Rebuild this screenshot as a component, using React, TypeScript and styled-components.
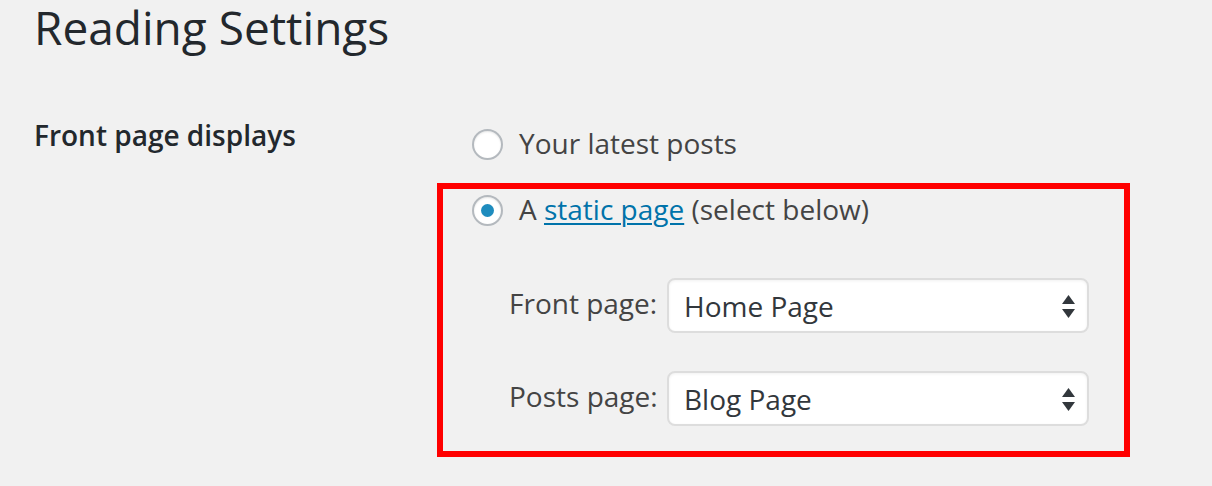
import React from 'react'
import styled, { createGlobalStyle } from 'styled-components'

const GlobalStyle = createGlobalStyle`
  html, body {
    margin: 0;
    padding: 0;
    background: #f1f1f1;
  }
  body {
    font-family: "Open Sans", "Noto Sans", sans-serif;
    color: #444;
    -webkit-font-smoothing: antialiased;
  }
`

const Page = styled.div`
  width: 1212px;
  height: 486px;
  overflow: hidden;
  padding-left: 34px;
  box-sizing: border-box;
`

const Title = styled.h1`
  margin: 0;
  font-size: 46px;
  font-weight: 400;
  line-height: 54px;
  color: #23282d;
`

const FormTable = styled.div`
  display: grid;
  grid-template-columns: 403px 1fr;
  margin-top: 61px;
`

const RowHeading = styled.div`
  font-size: 28px;
  font-weight: 600;
  line-height: 40px;
  color: #23282d;
`

const Options = styled.div`
  display: flex;
  flex-direction: column;
  padding-top: 8px;
`

const OptionRow = styled.label<{ $indent?: number }>`
  display: flex;
  align-items: center;
  gap: 16px;
  height: 40px;
  margin-left: ${p => p.$indent ?? 0}px;
  font-size: 28px;
  line-height: 40px;
  color: #444;
`

const Radio = styled.span<{ $checked?: boolean }>`
  position: relative;
  width: 31px;
  height: 31px;
  margin-top: 2px;
  box-sizing: border-box;
  border-radius: 50%;
  border: 2px solid #b4b9be;
  background: #fff;
  box-shadow: inset 0 1px 2px rgba(0, 0, 0, 0.1);
  flex-shrink: 0;

  &::after {
    content: '';
    display: ${p => (p.$checked ? 'block' : 'none')};
    position: absolute;
    left: 50%;
    top: 50%;
    width: 13px;
    height: 13px;
    margin: -6.5px 0 0 -6.5px;
    border-radius: 50%;
    background: #1e8cbe;
  }
`

const Link = styled.a`
  color: #0073aa;
  text-decoration: underline;
  text-decoration-thickness: 2px;
  text-underline-offset: 3px;
`

const Highlight = styled.div`
  width: 693px;
  box-sizing: border-box;
  margin-top: 20px;
  border: 6px solid #ff0000;
  padding: 0 0 25px 29px;
`

const PageList = styled.div`
  display: flex;
  flex-direction: column;
  gap: 38px;
  margin-top: 49px;
  padding-left: 37px;
`

const PageRow = styled.div`
  display: flex;
  align-items: center;
  height: 55px;
`

const PageLabel = styled.span`
  width: 147px;
  margin-right: 11px;
  margin-bottom: 6px;
  font-size: 28px;
  line-height: 40px;
  color: #444;
  white-space: nowrap;
`

const SelectBox = styled.div`
  display: flex;
  align-items: center;
  justify-content: space-between;
  width: 422px;
  height: 55px;
  box-sizing: border-box;
  padding: 0 12px 0 15px;
  border: 2px solid #ddd;
  border-radius: 8px;
  background: #fff;
  box-shadow: inset 0 1px 3px rgba(0, 0, 0, 0.06);
  font-size: 28px;
  line-height: 40px;
  color: #32373c;
`

const Arrows = () => (
  <svg width="13" height="24" viewBox="0 0 13 24" style={{ marginTop: 2 }}>
    <path d="M6.5 0 L13 9 L0 9 Z" fill="#32373c" />
    <path d="M0 14 L13 14 L6.5 23 Z" fill="#32373c" />
  </svg>
)

const pages = [
  { label: 'Front page:', value: 'Home Page' },
  { label: 'Posts page:', value: 'Blog Page' },
]

const App = (): JSX.Element => {
  return (
    <Page>
      <GlobalStyle />
      <Title>Reading Settings</Title>
      <FormTable>
        <RowHeading>Front page displays</RowHeading>
        <Options>
          <OptionRow $indent={35}>
            <Radio />
            Your latest posts
          </OptionRow>
          <Highlight>
            <OptionRow>
              <Radio $checked />
              <span>
                A <Link href="#">static page</Link> (select below)
              </span>
            </OptionRow>
            <PageList>
              {pages.map(p => (
                <PageRow key={p.label}>
                  <PageLabel>{p.label}</PageLabel>
                  <SelectBox>
                    {p.value}
                    <Arrows />
                  </SelectBox>
                </PageRow>
              ))}
            </PageList>
          </Highlight>
        </Options>
      </FormTable>
    </Page>
  )
}

export default App
